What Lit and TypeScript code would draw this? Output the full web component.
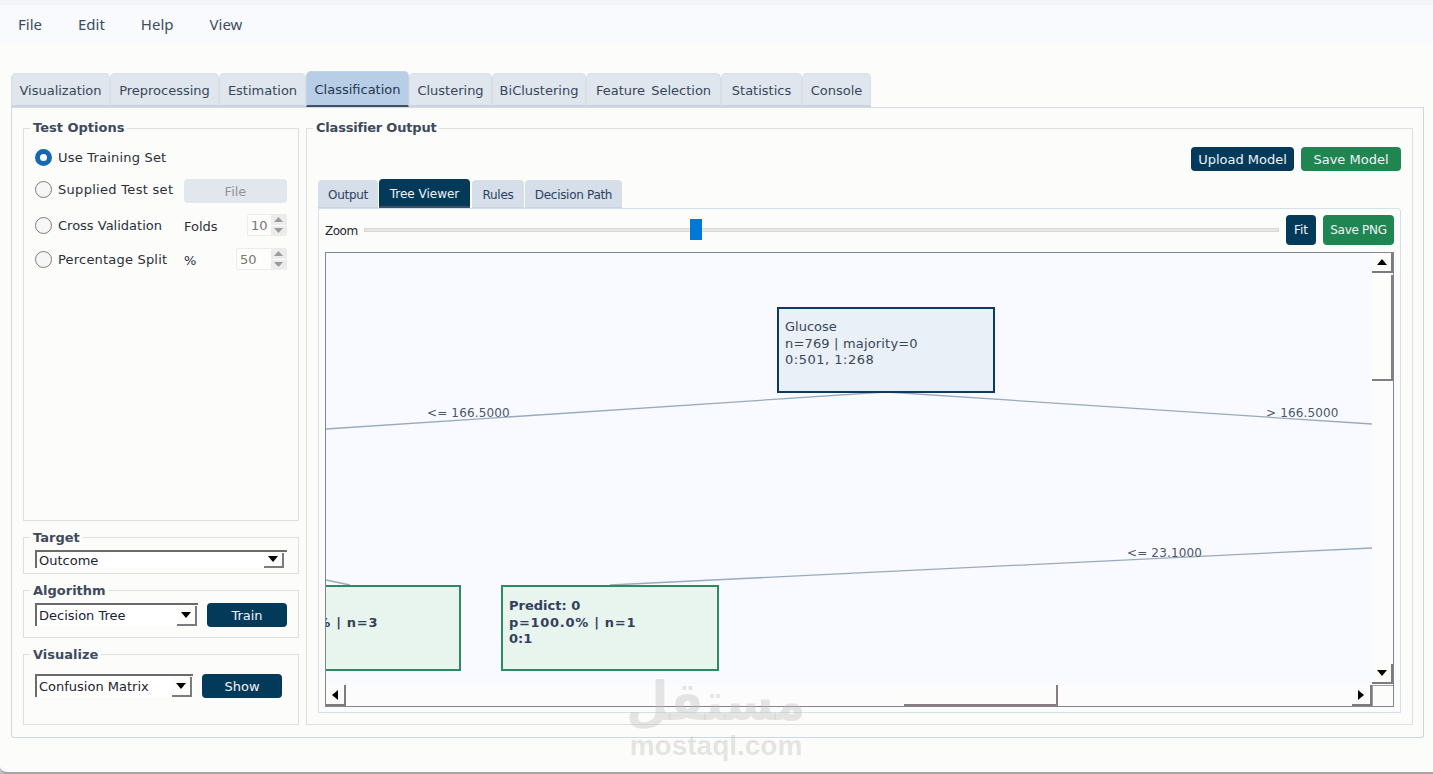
import { LitElement, html, css, svg } from "lit";
import { customElement } from "lit/decorators.js";

const MAIN_TABS = ["Visualization", "Preprocessing", "Estimation", "Classification", "Clustering", "BiClustering", "Feature Selection", "Statistics", "Console"];
const MAIN_WIDTHS = [99, 109, 87, 103, 83, 94, 135, 81, 69];
const INNER_TABS = ["Output", "Tree Viewer", "Rules", "Decision Path"];
const INNER_WIDTHS = [60, 91, 52, 97];

@customElement("app-root")
export class AppRoot extends LitElement {
  static styles = css`
    :host { display: block; height: 774px; font-family: "DejaVu Sans", Verdana, sans-serif; font-size: 13px; color: #2f3a4a; overflow: hidden; background: #b9c4cc; }
    * { box-sizing: border-box; }
    .window { position: relative; height: 774px; background: #fcfcfb; border-bottom: 2px solid #a6a6a6; border-bottom-left-radius: 7px; display: flex; flex-direction: column; overflow: hidden; }
    .menubar { height: 43px; margin-bottom: 28px; border-top: 5px solid #f3f5f9; background: #f8fafd; display: flex; padding-left: 18px; gap: 36px; align-items: center; font-family: "Noto Sans", sans-serif; font-size: 15px; color: #3d4b5e; }
    .tabs { display: flex; align-items: flex-end; height: 36px; margin-left: 11px; gap: 0; }
    .tab { height: 34px; padding-top: 2px; background: #dfe6ee; border: 1px solid #d8dfe7; border-bottom: 2px solid #ccd3dc; border-radius: 5px 5px 0 0; display: flex; align-items: center; justify-content: center; color: #37465a; white-space: nowrap; word-spacing: 2px; }
    .tab.on { height: 36px; background: #b8cde6; border-color: #c5d4e6; border-bottom: 2px solid #3f4f66; color: #24364e; }
    .pane { margin: 0 9px 0 11px; height: 631px; border: 1px solid #cfd6de; border-top-color: #d4dae1; padding: 12px 10px 12px 11px; display: flex; gap: 7px; border-radius: 0 0 3px 3px; }
    .left { width: 276px; display: flex; flex-direction: column; gap: 7px; }
    fieldset { margin: 0; min-width: 0; padding: 0 11px; border: 1px solid #dfdfdd; }
    legend { margin-left: -5px; padding: 0 3px; font-weight: 700; font-size: 13px; line-height: 16px; color: #3f4a5c; }
    .target legend, .algo legend, .viz legend { padding-top: 2px; }
    .right legend { letter-spacing: -0.2px; }
    .options { flex: 1; padding-top: 12px; display: flex; flex-direction: column; }
    .target { height: 46px; padding-top: 4px; }
    .algo { height: 57px; padding-top: 4px; }
    .viz { height: 80px; padding-top: 11px; }
    .opt { display: flex; align-items: center; color: #2b2f38; }
    .opt.r1 { height: 18px; margin-bottom: 13px; }
    .opt.r2 { height: 24px; margin-bottom: 11px; }
    .opt.r3 { height: 22px; margin-bottom: 12px; }
    .opt.r4 { height: 22px; }
    .radio { width: 17px; height: 17px; border-radius: 50%; border: 1px solid #7b7b7b; background: #f6f6f6; margin-right: 6px; flex: none; }
    .radio.on { border: 5px solid #1768b0; background: #fff; }
    .lbl { width: 126px; flex: none; letter-spacing: 0.2px; white-space: nowrap; }
    .r2 .radio, .r2 .lbl { margin-top: -4px; }
    .r2 .lbl { letter-spacing: 0.3px; }
    .r3 .lbl { letter-spacing: 0; }
    .filebtn { width: 103px; height: 24px; background: #e2e6ed; border-radius: 4px; color: #8f949c; display: flex; align-items: center; justify-content: center; }
    .unit { flex: 1; padding-top: 2px; color: #2b2f38; }
    .spin { height: 22px; border: 1px solid #ececea; border-radius: 2px; display: flex; align-items: center; background: #fdfdfc; padding-left: 3px; color: #77786f; }
    .spin.w40 { width: 40px; }
    .spin.w51 { width: 51px; }
    .spin .v { flex: 1; }
    .arrows { width: 15px; height: 20px; display: flex; flex-direction: column; gap: 1px; }
    .arrows span { flex: 1; background: #ececec; display: flex; align-items: center; justify-content: center; }
    .arrows svg { display: block; }
    .selrow { display: flex; align-items: flex-start; gap: 9px; }
    .select { height: 18px; border-top: 2px solid #6b6b6b; border-left: 2px solid #6b6b6b; background: #fff; display: flex; align-items: center; justify-content: space-between; padding-left: 2px; color: #1b2230; overflow: hidden; }
    .select .txt { white-space: nowrap; }
    .sel-t { width: 252px; }
    .sel-a { width: 163px; height: 23px; }
    .sel-v { width: 158px; height: 23px; }
    .drop { width: 20px; height: 15px; margin-right: 3px; background: #fcfcfb; border-right: 2px solid #7f7a7d; border-bottom: 2px solid #7f7a7d; display: flex; align-items: center; justify-content: center; flex: none; }
    .sel-a .drop, .sel-v .drop { height: 20px; margin-right: 1px; }
    .btn { border-radius: 4px; color: #eef4f8; display: flex; align-items: center; justify-content: center; white-space: nowrap; flex: none; }
    .navy { background: #033a5a; }
    .green { background: #1f8651; }
    .b80 { width: 80px; height: 24px; }
    .right { flex: 1; min-width: 0; display: flex; flex-direction: column; padding-top: 11px; padding-bottom: 11px; }
    .actions { display: flex; justify-content: flex-end; gap: 7px; height: 24px; margin-bottom: 8px; }
    .up { width: 103px; }
    .sv { width: 100px; }
    .subtabs { display: flex; align-items: flex-end; height: 29px; gap: 1px; font-size: 12px; }
    .subtab { height: 28px; padding-top: 2px; background: #d6dfe9; border-radius: 4px 4px 0 0; display: flex; align-items: center; justify-content: center; color: #2c4160; white-space: nowrap; border-bottom: 1px solid #c9d3df; letter-spacing: -0.3px; }
    .subtab.on { height: 29px; background: #033a5a; color: #eef4f8; border-bottom: 2px solid #3f4f66; letter-spacing: 0; margin-right: 1px; }
    .subpane { flex: 1; min-height: 0; width: 1083px; border: 1px solid #d7e0ea; border-radius: 0 3px 0 0; padding: 6px 6px 5px; display: flex; flex-direction: column; }
    .zoomrow { height: 30px; margin-bottom: 7px; display: flex; align-items: center; font-size: 12px; gap: 7px; }
    .zoomlbl { width: 32px; color: #23262c; padding-top: 2px; letter-spacing: -0.5px; }
    .track { position: relative; flex: 1; height: 4px; margin-top: -1px; background: #e6e6e6; border: 1px solid #d9d9d9; }
    .thumb { position: absolute; top: -10px; width: 12px; height: 21px; background: #0078d7; }
    .fit { width: 30px; height: 30px; }
    .png { width: 71px; height: 30px; letter-spacing: -0.3px; }
    .scroll { flex: 1; min-height: 0; border: 1px solid #80858f; display: grid; grid-template-columns: 1fr 21px; grid-template-rows: 1fr 21px; }
    .viewport { position: relative; overflow: hidden; background: #f8faff; }
    .edges { position: absolute; inset: 0; display: block; }
    .node { position: absolute; width: 218px; height: 86px; border: 2px solid; padding: 10px 6px; line-height: 16.5px; white-space: pre; }
    .split { background: #e9f0f8; border-color: #0e3a60; color: #3a4656; }
    .leaf { background: #e8f5ee; border-color: #2e8b5f; color: #33405a; font-weight: 700; padding-top: 11px; }
    .w1 { letter-spacing: 0.17px; }
    .w2 { letter-spacing: 0.5px; }
    .w3 { letter-spacing: 0.7px; }
    .elabel { position: absolute; color: #4a5666; font-size: 12px; line-height: 14px; white-space: nowrap; letter-spacing: 0.15px; }
    .sb-btn { background: #fcfcfb; border-right: 2px solid #7f7a7d; border-bottom: 2px solid #7f7a7d; display: flex; align-items: center; justify-content: center; flex: none; }
    .vbar { background: #fbfcfb; display: flex; flex-direction: column; }
    .vbar .sb-btn { height: 20px; }
    .vthumb { height: 106px; margin-top: 2px; background: #fdfdfc; border-right: 2px solid #857d80; border-bottom: 2px solid #857d80; }
    .vfill { flex: 1; }
    .hbar { background: #fbfcfb; display: flex; }
    .hbar .sb-btn { width: 20px; height: 21px; }
    .hfill { flex: 1; }
    .hthumb { width: 154px; height: 21px; background: #fcfcfb; border-right: 2px solid #857d80; border-bottom: 2px solid #857d80; margin-right: 294px; }
    .corner { background: #fcfcfb; border-left: 1px solid #9a9da3; border-top: 1px solid #9a9da3; }
    .mark { position: absolute; left: 630px; top: 674px; width: 172px; display: flex; flex-direction: column; align-items: center; color: rgba(190, 190, 188, 0.38); pointer-events: none; font-weight: 700; }
    .mark .ar { font-size: 54px; line-height: 56px; white-space: nowrap; transform: scaleX(0.91); }
    .mark .en { font-family: "Liberation Sans", Arial, sans-serif; font-size: 28px; line-height: 28px; margin-top: 2px; white-space: nowrap; }
  `;

  private tri(dir: "up" | "down" | "left" | "right", color = "#000") {
    const p = { up: "0,6 5,0 10,6", down: "0,0 10,0 5,6", left: "6,0 6,10 0,5", right: "0,0 0,10 6,5" }[dir];
    const w = dir === "left" || dir === "right" ? 6 : 10;
    const h = dir === "left" || dir === "right" ? 10 : 6;
    return html`<svg width=${w} height=${h} viewBox="0 0 ${w} ${h}"><polygon points=${p} fill=${color}></polygon></svg>`;
  }

  private arrows() {
    const small = (pts: string) => html`<svg width="9" height="5" viewBox="0 0 9 5"><polygon points=${pts} fill="#9a9a9a"></polygon></svg>`;
    return html`<div class="arrows"><span>${small("0,5 4.5,0 9,5")}</span><span>${small("0,0 9,0 4.5,5")}</span></div>`;
  }

  private select(cls: string, text: string) {
    return html`<div class="select ${cls}"><span class="txt">${text}</span><span class="drop">${this.tri("down")}</span></div>`;
  }

  render() {
    return html`
      <div class="window">
        <nav class="menubar"><span>File</span><span>Edit</span><span>Help</span><span>View</span></nav>
        <div class="tabs">
          ${MAIN_TABS.map((t, i) => html`<div class="tab ${t === "Classification" ? "on" : ""}" style="width:${MAIN_WIDTHS[i]}px">${t}</div>`)}
        </div>
        <div class="pane">
          <div class="left">
            <fieldset class="options">
              <legend>Test Options</legend>
              <div class="opt r1"><span class="radio on"></span><span class="lbl">Use Training Set</span></div>
              <div class="opt r2"><span class="radio"></span><span class="lbl">Supplied Test set</span><div class="filebtn">File</div></div>
              <div class="opt r3"><span class="radio"></span><span class="lbl">Cross Validation</span><span class="unit">Folds</span><div class="spin w40"><span class="v">10</span>${this.arrows()}</div></div>
              <div class="opt r4"><span class="radio"></span><span class="lbl">Percentage Split</span><span class="unit">%</span><div class="spin w51"><span class="v">50</span>${this.arrows()}</div></div>
            </fieldset>
            <fieldset class="target"><legend>Target</legend>${this.select("sel-t", "Outcome")}</fieldset>
            <fieldset class="algo"><legend>Algorithm</legend>
              <div class="selrow">${this.select("sel-a", "Decision Tree")}<div class="btn navy b80">Train</div></div>
            </fieldset>
            <fieldset class="viz"><legend>Visualize</legend>
              <div class="selrow">${this.select("sel-v", "Confusion Matrix")}<div class="btn navy b80">Show</div></div>
            </fieldset>
          </div>
          <fieldset class="right">
            <legend>Classifier Output</legend>
            <div class="actions"><div class="btn navy up">Upload Model</div><div class="btn green sv">Save Model</div></div>
            <div class="subtabs">
              ${INNER_TABS.map((t, i) => html`<div class="subtab ${t === "Tree Viewer" ? "on" : ""}" style="width:${INNER_WIDTHS[i]}px">${t}</div>`)}
            </div>
            <div class="subpane">
              <div class="zoomrow">
                <span class="zoomlbl">Zoom</span>
                <div class="track"><div class="thumb" style="left:${(325 / 913) * 100}%"></div></div>
                <div class="btn navy fit">Fit</div>
                <div class="btn green png">Save PNG</div>
              </div>
              <div class="scroll">
                <div class="viewport">
                  <svg class="edges" viewBox="0 0 1046 432" width="1046" height="432">
                    ${[[0, 176, 560, 139], [560, 139, 1046, 171], [0, 327, 24, 332], [284, 332, 1046, 295]].map(
                      ([a, b, c, d]) => svg`<line x1=${a} y1=${b} x2=${c} y2=${d} stroke="#9aaabd" stroke-width="1.3"></line>`
                    )}
                  </svg>
                  <span class="elabel" style="left:101px;top:153px">&lt;= 166.5000</span>
                  <span class="elabel" style="left:940px;top:153px">&gt; 166.5000</span>
                  <span class="elabel" style="left:801px;top:293px">&lt;= 23.1000</span>
                  <div class="node split" style="left:451px;top:54px">Glucose
<span class="w1">n=769 | majority=0</span>
<span class="w2">0:501, 1:268</span></div>
                  <div class="node leaf" style="left:-83px;top:332px">Predict: 1
<span class="w3">p=100.0% | n=3</span>
1:3</div>
                  <div class="node leaf" style="left:175px;top:332px">Predict: 0
<span class="w3">p=100.0% | n=1</span>
0:1</div>
                </div>
                <div class="vbar">
                  <div class="sb-btn">${this.tri("up")}</div>
                  <div class="vthumb"></div>
                  <div class="vfill"></div>
                  <div class="sb-btn" style="margin-bottom:1px">${this.tri("down")}</div>
                </div>
                <div class="hbar">
                  <div class="sb-btn">${this.tri("left")}</div>
                  <div class="hfill"></div>
                  <div class="hthumb"></div>
                  <div class="sb-btn">${this.tri("right")}</div>
                </div>
                <div class="corner"></div>
              </div>
            </div>
          </fieldset>
        </div>
        <div class="mark"><span class="ar" dir="rtl">مستقل</span><span class="en">mostaql.com</span></div>
      </div>
    `;
  }
}
